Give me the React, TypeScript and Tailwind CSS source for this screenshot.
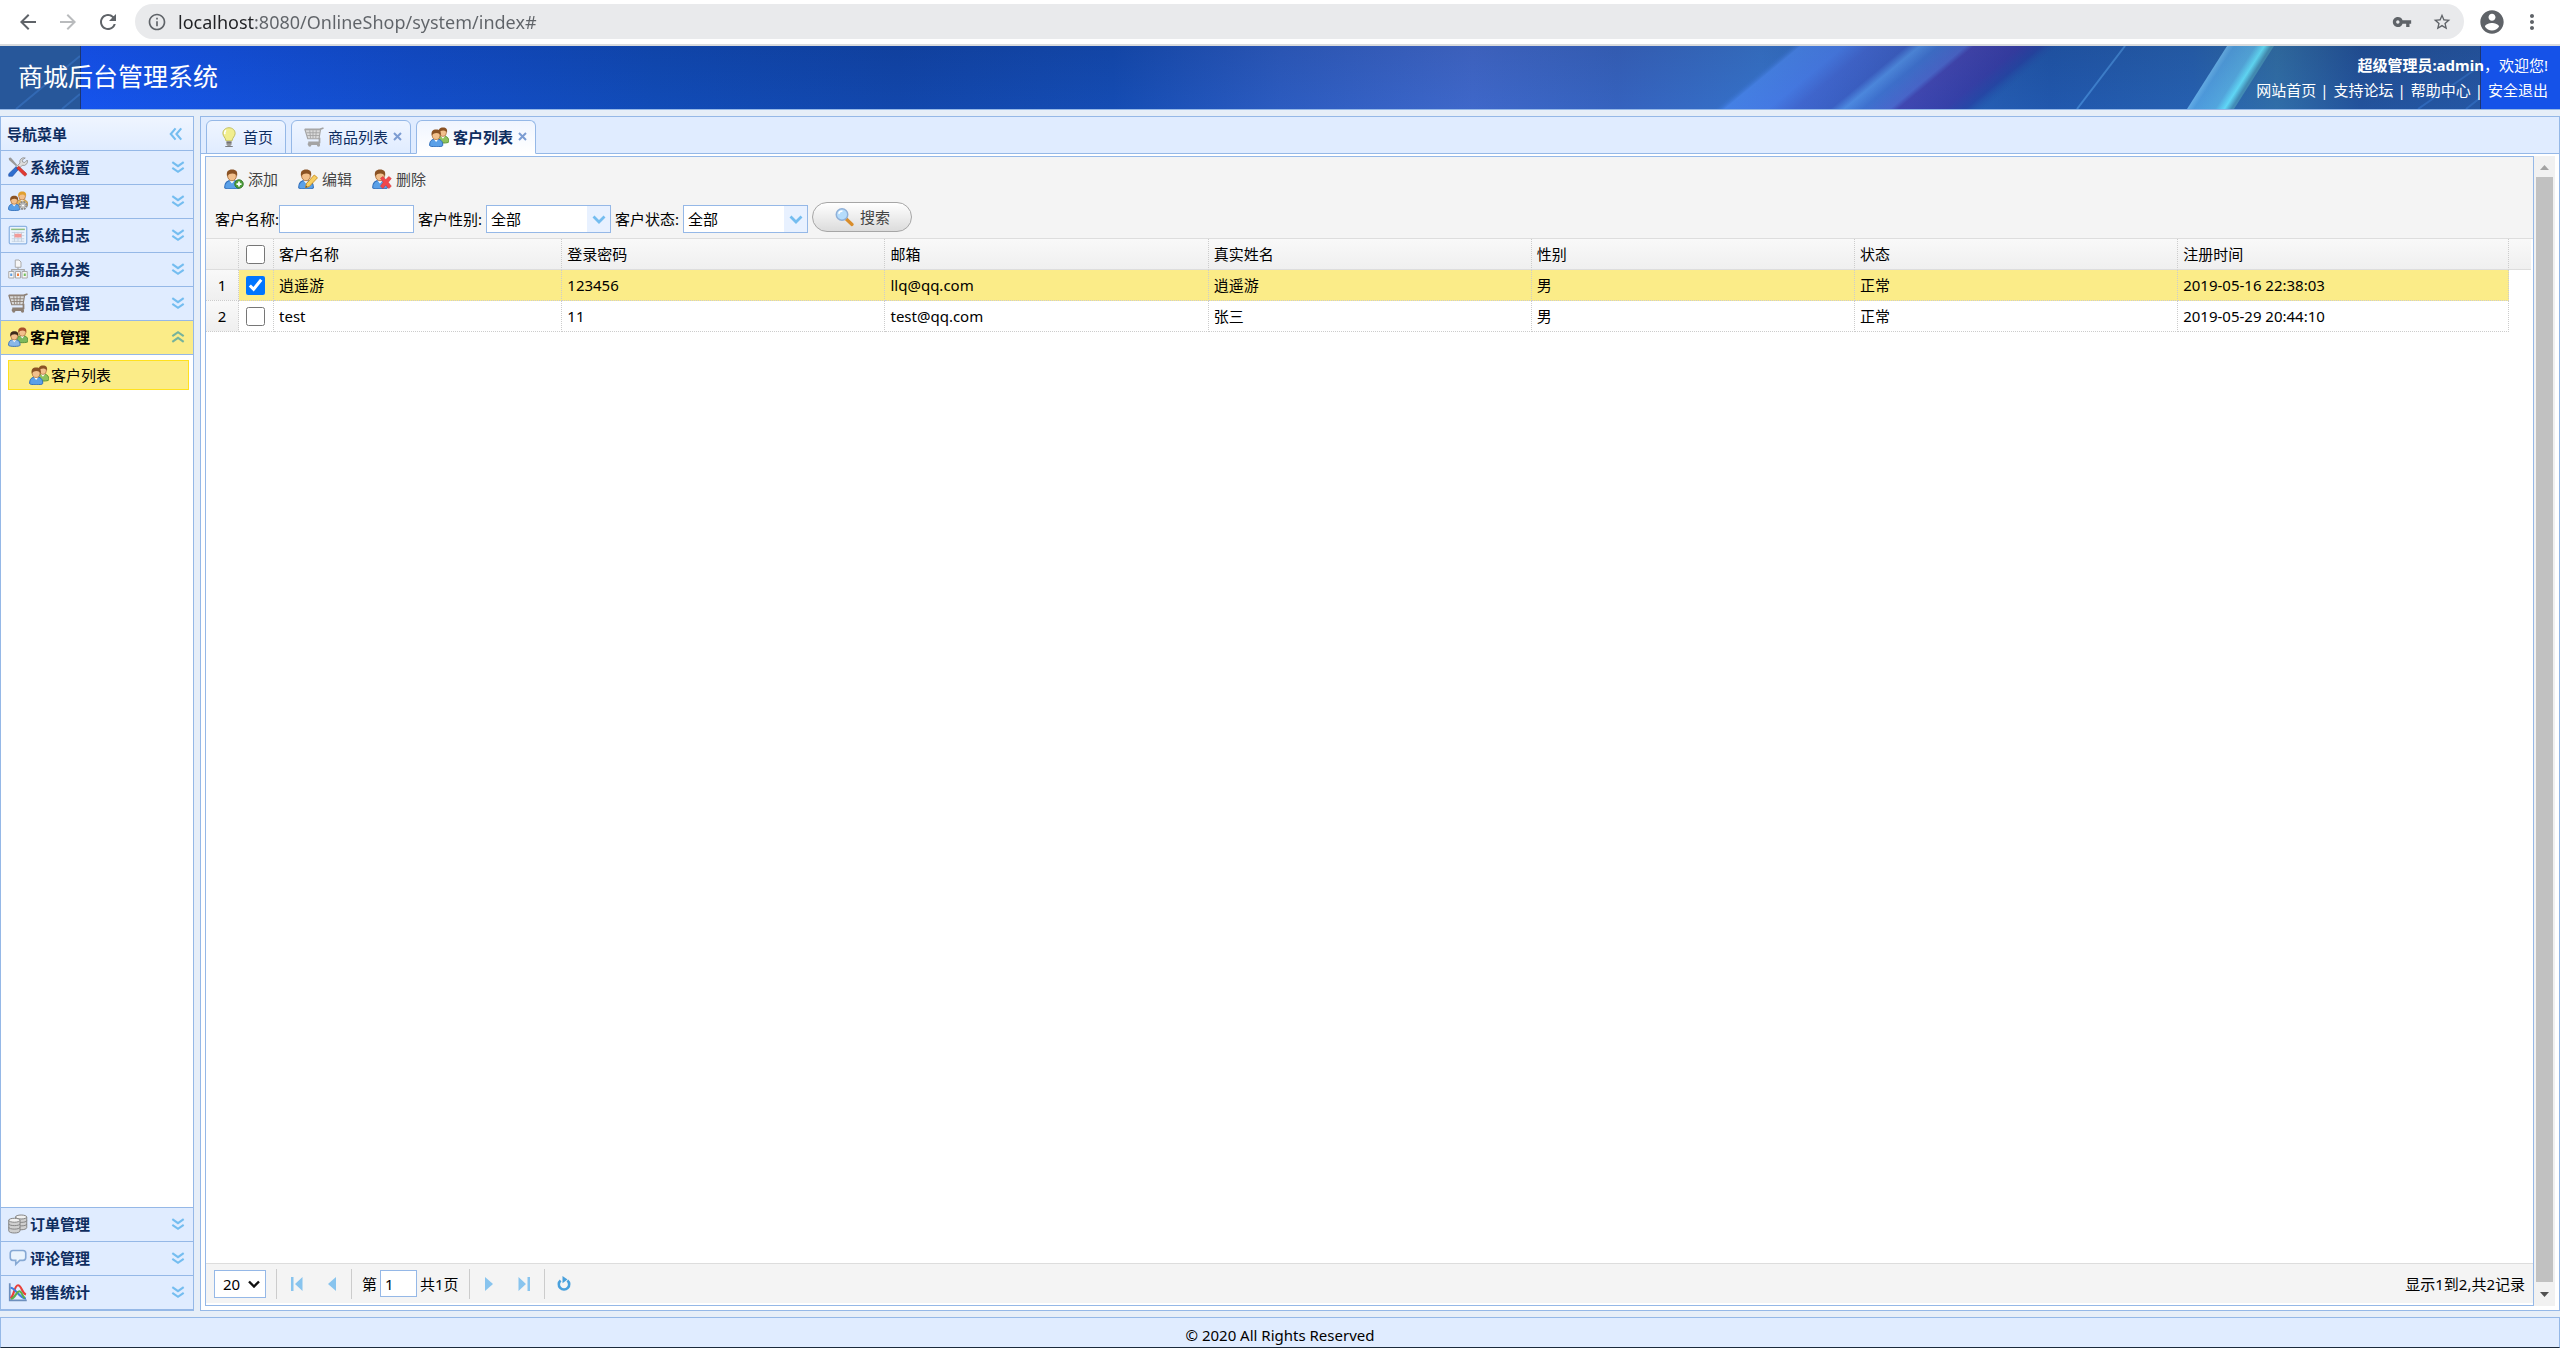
import { useState } from 'react';
import type { ReactNode } from 'react';
import {
  MdArrowBack,
  MdArrowForward,
  MdInfoOutline,
  MdMoreVert,
  MdRefresh,
  MdStarBorder,
  MdVpnKey,
} from 'react-icons/md';

/* ---------- small colour icons, 16x16 grid ---------- */

function Icon({ children }: { children: ReactNode }) {
  return (
    <svg viewBox="0 0 16 16" className="size-5 shrink-0" aria-hidden="true">
      {children}
    </svg>
  );
}

interface PersonProps {
  x: number;
  y: number;
  s?: number;
  hair?: string;
  shirt?: string;
  edge?: string;
}

function Person({ x, y, s = 1, hair = '#8a5224', shirt = '#5aa0e8', edge = '#2f6cb8' }: PersonProps) {
  return (
    <g transform={`translate(${x} ${y}) scale(${s})`}>
      <path d="M.5 13.2C.5 9.4 2.2 8 5.7 8s5.300 1.400 5.300 5.200c0 1.400-10.500 1.400-10.500 0z" fill={shirt} stroke={edge} strokeWidth="0.8" />
      <path d="M3.8 8l1.9 2.400L7.600 8z" fill="#fff" />
      <ellipse cx="5.7" cy="5" rx="3.1" ry="3.4" fill="#f2c08c" stroke="#a86a34" strokeWidth="0.6" />
      <path d="M2.2 5.400C1.500 1.800 3 .4 5.800.4s4.200 1.400 3.500 5C8.800 3.800 7.800 3.200 6 3.200s-3.200.6-3.800 2.200z" fill={hair} />
    </g>
  );
}

function ToolsIcon() {
  return (
    <Icon>
      <path d="M.6.800l1.600-.4L7.400 6.400l-1 1L.8 2.400z" fill="#999" />
      <path d="M13.800.800a3.200 3.200 0 0 0-4.200 4L6.600 8l1.700 1.700 3.100-3.100a3.200 3.200 0 0 0 4-4.200l-2 2-1.700-.4-.4-1.600z" fill="#ddd" stroke="#888" strokeWidth="0.6" />
      <path d="M6.400 7.800l2 2L3.600 15.400H.6v-2z" fill="#2f6fd0" stroke="#1d4c9e" strokeWidth="0.5" />
      <path d="M8.600 7.400l6 5.600c.9 1-.6 2.800-1.800 1.800L7 9z" fill="#e23a32" stroke="#b02020" strokeWidth="0.5" />
    </Icon>
  );
}

function UserGearIcon() {
  return (
    <Icon>
      <Person x={6.4} y={0} s={0.86} hair="#e0a030" shirt="#e8b860" edge="#b88430" />
      <Person x={0} y={3.4} s={0.86} />
      <circle cx="12" cy="11.6" r="2.8" fill="#ddd" stroke="#8a8a8a" strokeWidth="1.8" strokeDasharray="1.5 0.7" />
      <circle cx="12" cy="11.6" r="1.300" fill="#fff" stroke="#999" strokeWidth="0.6" />
    </Icon>
  );
}

function CalendarIcon() {
  return (
    <Icon>
      <rect x="1" y="1" width="14" height="14" rx="1" fill="#eaf3fd" stroke="#8db3e2" />
      <path d="M2.500 3.500h11" stroke="#8fbf80" strokeWidth="1.2" />
      <path d="M3 6h10M3 8.500h10M3 11h10M3 13h10M5.200 5.500v8M8 5.500v8M10.800 5.500v8" stroke="#c2cfde" strokeWidth="0.7" />
      <rect x="5.2" y="7" width="5.6" height="3" fill="#f29a96" />
    </Icon>
  );
}

function SitemapIcon() {
  return (
    <Icon>
      <path d="M8 6v3M3 10.500V8.500h10v2" stroke="#a9a9a9" fill="none" />
      <path d="M5.800.800h3l1.600 1.600v4.200H5.800zM.6 10h4.200v5.200H.6zM6 10h4v5.200H6zM11.200 10h4.200v5.200h-4.200z" fill="#f7f7f7" stroke="#a9a9a9" strokeWidth="0.8" />
      <path d="M1.800 11.600h1.600v2H1.800z" fill="#5f9ee0" />
      <path d="M7.200 11.600h1.600v2H7.200z" fill="#f08040" />
      <path d="M12.600 11.600h1.600v2h-1.600z" fill="#6fbf5a" />
    </Icon>
  );
}

function CartIcon({ tone = '#8c7f74' }: { tone?: string }) {
  return (
    <Icon>
      <path d="M.6 1.800h12L15.600.8" fill="none" stroke={tone} strokeWidth="1.4" />
      <path d="M.8 2.200h12.400L12 9.400H3z" fill="#dadada" stroke={tone} strokeWidth="0.9" />
      <path d="M2 4.600h10.600M2.600 6.800h9.600M4.600 2.600l.6 6.400M7.200 2.600v6.400M9.800 2.600l-.4 6.400" stroke={tone} strokeWidth="0.7" />
      <path d="M12.400 8.600v3.600H3.400M3 13.600h9.600" fill="none" stroke={tone} strokeWidth="1.4" />
      <circle cx="4.6" cy="14.4" r="1.300" fill={tone} />
      <circle cx="11.6" cy="14.4" r="1.300" fill={tone} />
    </Icon>
  );
}

function CustomersIcon() {
  return (
    <Icon>
      <Person x={6.4} y={0} s={0.88} hair="#a8502c" shirt="#7cb85c" edge="#4c8a34" />
      <Person x={0} y={3} s={0.88} hair="#3d2a1c" shirt="#8ab8e8" />
    </Icon>
  );
}

function GroupIcon() {
  return (
    <Icon>
      <Person x={6} y={0} s={0.9} shirt="#8fc25c" edge="#54902c" />
      <Person x={0} y={1.6} s={1} />
    </Icon>
  );
}

function DatabaseIcon() {
  return (
    <Icon>
      {[
        [6, 0.4],
        [0.6, 3],
      ].map(([x, y]) => (
        <g key={x} transform={`translate(${x} ${y})`} stroke="#858585" strokeWidth="0.8">
          <path d="M0 2v8.400c0 2.400 9 2.400 9 0V2z" fill="#cfcfcf" />
          <path d="M0 4.800c0 2 9 2 9 0M0 7.600c0 2 9 2 9 0" fill="none" />
          <ellipse cx="4.5" cy="2" rx="4.5" ry="1.6" fill="#f1f1f1" />
        </g>
      ))}
    </Icon>
  );
}

function CommentIcon() {
  return (
    <Icon>
      <path d="M4 2h8c1.400 0 2.200.9 2.200 2.200v3.400c0 1.400-.8 2.300-2.200 2.300H9.400L6.200 13V9.900H4c-1.400 0-2.200-.9-2.200-2.300V4.200C1.800 2.900 2.600 2 4 2z" fill="#eaf4fd" stroke="#86a9d4" strokeWidth="1.3" />
    </Icon>
  );
}

function ChartIcon() {
  return (
    <Icon>
      <path d="M1.400 1v13.600H15" fill="none" stroke="#6d8fbd" strokeWidth="1.4" />
      <path d="M2 13C5 11 5 2.600 8 2.600S11 9 14.400 10" fill="none" stroke="#e8403a" strokeWidth="1.7" />
      <path d="M2 4.600c4 0 7 8.600 12.400 8.600" fill="none" stroke="#3d7fe0" strokeWidth="1.7" />
      <path d="M2.400 13.400C6 13 6.600 7.400 9 7.400s2.400 4.600 4.600 5.400" fill="none" stroke="#5cae4a" strokeWidth="1.6" />
    </Icon>
  );
}

function BulbIcon() {
  return (
    <Icon>
      <path d="M8 .6c2.900 0 4.900 2 4.900 4.500 0 2.300-2.200 3.400-2.500 6H5.600c-.3-2.600-2.500-3.700-2.500-6C3.100 2.600 5.100.6 8 .6z" fill="#f1ee8e" stroke="#c2bf62" strokeWidth="0.8" />
      <path d="M5.600 2.600c-1 .8-1.200 2.200-.8 3.200" stroke="#fff" strokeWidth="1.2" fill="none" />
      <path d="M6 11.200h4v3l-1 1H7l-1-1z" fill="#9a9a9a" />
      <path d="M6 12.600h4M5 15.600h6" stroke="#555" strokeWidth="0.6" />
    </Icon>
  );
}

function UserAddIcon() {
  return (
    <Icon>
      <Person x={0} y={0} s={1.12} />
      <circle cx="12" cy="12" r="3.4" fill="#4f9e3c" stroke="#2f7424" strokeWidth="0.7" />
      <path d="M12 10v4M10 12h4" stroke="#fff" strokeWidth="1.4" />
    </Icon>
  );
}

function UserEditIcon() {
  return (
    <Icon>
      <Person x={0} y={0} s={1.12} />
      <path d="M6 15l.8-3.400L13 4.800l2.600 2.200-6.400 6.800z" fill="#f8cf62" stroke="#c98a1c" strokeWidth="0.7" />
      <path d="M6 15l.4-1.600 1.200 1z" fill="#444" />
    </Icon>
  );
}

function UserDeleteIcon() {
  return (
    <Icon>
      <Person x={0} y={0} s={1.12} />
      <path d="M6.800 7.400l2-1.400 2.200 2.600L13.400 6l2 1.600L13 10.600l2.400 3.200-2 1.800-2.400-2.800-2.200 2.800-2-1.800L9 10.600z" fill="#f0484c" stroke="#d8363c" strokeWidth="0.5" />
    </Icon>
  );
}

function SearchIcon() {
  return (
    <Icon>
      <path d="M9.600 9.400l4.800 4.600" stroke="#d98d2b" strokeWidth="2.6" strokeLinecap="round" />
      <circle cx="6.4" cy="6" r="4.6" fill="#b5dcfb" stroke="#8fb0d8" strokeWidth="1.2" />
      <path d="M3.800 5.400c.4-1.600 1.600-2.200 3-2.200" stroke="#fff" strokeWidth="1.2" fill="none" />
    </Icon>
  );
}

/* ---------- arrows ---------- */

type Direction = 'left' | 'down' | 'up';

const chevronPaths: Record<Direction, string> = {
  left: 'M7.500 1.500L2 8l5.500 6.500M14 1.500L8.500 8l5.500 6.500',
  down: 'M1.500 2.500L8 7l6.500-4.500M1.500 9L8 13.500 14.500 9',
  up: 'M1.500 7L8 2.500 14.500 7M1.500 13.500L8 9l6.500 4.500',
};

function DoubleChevron({ dir }: { dir: Direction }) {
  return (
    <svg viewBox="0 0 16 16" className="size-3.5 shrink-0" aria-hidden="true">
      <path d={chevronPaths[dir]} fill="none" stroke={dir === 'up' ? '#76b39c' : '#74bdf0'} strokeWidth="2.4" />
    </svg>
  );
}

/* ---------- banner ---------- */

function BannerArt() {
  return (
    <svg
      viewBox="0 0 2560 63"
      preserveAspectRatio="xMidYMid slice"
      className="absolute inset-0 size-full"
      aria-hidden="true"
    >
      <defs>
        <linearGradient id="base" gradientUnits="userSpaceOnUse" x1="81" y1="0" x2="2481" y2="0">
          <stop offset="0" stopColor="#1552f0" />
          <stop offset="0.06" stopColor="#1450dc" />
          <stop offset="0.14" stopColor="#124bc6" />
          <stop offset="0.24" stopColor="#1048b0" />
          <stop offset="0.34" stopColor="#1143a3" />
          <stop offset="0.43" stopColor="#1449ac" />
          <stop offset="0.5" stopColor="#2f5bbb" />
          <stop offset="0.58" stopColor="#4569c6" />
          <stop offset="0.64" stopColor="#3a63b9" />
          <stop offset="0.7" stopColor="#3a74c4" />
          <stop offset="0.82" stopColor="#2256a4" />
          <stop offset="0.88" stopColor="#2860a8" />
          <stop offset="0.915" stopColor="#34709f" />
          <stop offset="0.95" stopColor="#245090" />
          <stop offset="1" stopColor="#27559a" />
        </linearGradient>
        <linearGradient id="shade" x1="0" y1="0" x2="0" y2="1">
          <stop offset="0" stopColor="#0c2f80" stopOpacity="0.15" />
          <stop offset="1" stopColor="#1a60e0" stopOpacity="0.15" />
        </linearGradient>
        <linearGradient id="rays" gradientUnits="userSpaceOnUse" x1="1790" y1="0" x2="1900" y2="133">
          <stop offset="0" stopColor="#3a72c8" stopOpacity="0" />
          <stop offset="0.04" stopColor="#4c86e6" />
          <stop offset="0.2" stopColor="#4c7ee4" />
          <stop offset="0.3" stopColor="#4668cc" />
          <stop offset="0.43" stopColor="#4060c0" />
          <stop offset="0.48" stopColor="#5590e0" />
          <stop offset="0.55" stopColor="#4474cc" />
          <stop offset="0.65" stopColor="#5068c8" />
          <stop offset="0.68" stopColor="#4644aa" />
          <stop offset="0.85" stopColor="#3a3ca0" />
          <stop offset="0.93" stopColor="#28449e" />
          <stop offset="1" stopColor="#2256a4" stopOpacity="0" />
        </linearGradient>
        <linearGradient id="cyan" gradientUnits="userSpaceOnUse" x1="2225" y1="0" x2="2258" y2="21">
          <stop offset="0" stopColor="#78c0ec" />
          <stop offset="0.2" stopColor="#56a4dc" />
          <stop offset="0.65" stopColor="#5cb2de" />
          <stop offset="0.85" stopColor="#6cecfc" />
          <stop offset="1" stopColor="#4a94b0" />
        </linearGradient>
      </defs>
      <rect width="2560" height="63" fill="url(#base)" />
      <path d="M1788 0h272l-76 63h-272z" fill="url(#rays)" />
      <path d="M2125 0l-48 63" stroke="#4486cc" strokeWidth="2" />
      <path d="M2227 0h47l-40 63h-47z" fill="url(#cyan)" />
      <path d="M2480 20l-62 43M2480 52l-14 11" stroke="#3269b4" strokeWidth="2" />
      <rect width="2560" height="63" fill="url(#shade)" />
      {/* the picture tiles, so its ends show at both sides */}
      <path d="M0 0h81v63H0z" fill="#27579a" />
      <path d="M80 10L16 63M80 48L62 63" stroke="#3269b4" strokeWidth="2" />
      <path d="M2481 0h79v63h-79z" fill="#1552e8" />
      <path d="M80.500 0v63M2480.500 0v63" stroke="#1c3672" />
    </svg>
  );
}

/* ---------- data ---------- */

interface MenuItem {
  label: string;
  icon: ReactNode;
}

const topMenu: MenuItem[] = [
  { label: '系统设置', icon: <ToolsIcon /> },
  { label: '用户管理', icon: <UserGearIcon /> },
  { label: '系统日志', icon: <CalendarIcon /> },
  { label: '商品分类', icon: <SitemapIcon /> },
  { label: '商品管理', icon: <CartIcon /> },
];

const bottomMenu: MenuItem[] = [
  { label: '订单管理', icon: <DatabaseIcon /> },
  { label: '评论管理', icon: <CommentIcon /> },
  { label: '销售统计', icon: <ChartIcon /> },
];

const columns = ['客户名称', '登录密码', '邮箱', '真实姓名', '性别', '状态', '注册时间'];

const customers = [
  ['逍遥游', '123456', 'llq@qq.com', '逍遥游', '男', '正常', '2019-05-16 22:38:03'],
  ['test', '11', 'test@qq.com', '张三', '男', '正常', '2019-05-29 20:44:10'],
];

/* ---------- parts ---------- */

function BrowserBar() {
  return (
    <div className="flex h-[46px] shrink-0 items-center border-b-2 border-[#d9dbdd] bg-white pb-px text-[#5f6368]">
      <div className="flex w-[135px] shrink-0 items-center gap-4 pl-4">
        <button type="button" aria-label="后退"><MdArrowBack className="size-6" /></button>
        <button type="button" aria-label="前进"><MdArrowForward className="size-6 text-[#b9bbbd]" /></button>
        <button type="button" aria-label="刷新"><MdRefresh className="size-6" /></button>
      </div>
      <div className="flex h-[35px] flex-1 items-center rounded-full bg-[#e9eaec] pr-3 pl-3">
        <MdInfoOutline className="size-5" />
        {/* host part is darker than the path */}
        <input
          type="text"
          aria-label="地址"
          className="ml-[11px] min-w-0 flex-1 bg-[linear-gradient(90deg,#202124_77px,#5f6368_77px)] bg-clip-text text-lg leading-6 text-transparent"
          defaultValue="localhost:8080/OnlineShop/system/index#"
        />
        <MdVpnKey className="mr-5 size-5" />
        <MdStarBorder className="size-5" />
      </div>
      <button type="button" aria-label="账号" className="ml-3.5">
        <svg viewBox="0 0 24 24" className="size-7" fill="currentColor">
          <path d="M12 2C6.480 2 2 6.480 2 12s4.480 10 10 10 10-4.480 10-10S17.520 2 12 2zm0 3c1.660 0 3 1.340 3 3s-1.340 3-3 3-3-1.340-3-3 1.340-3 3-3zm0 14.200c-2.500 0-4.710-1.280-6-3.220.03-1.990 4-3.080 6-3.080 1.990 0 5.970 1.090 6 3.080-1.290 1.940-3.500 3.220-6 3.220z" />
        </svg>
      </button>
      <button type="button" aria-label="更多" className="mr-4 ml-3.5"><MdMoreVert className="size-6" /></button>
    </div>
  );
}

function Banner() {
  const links = ['网站首页', '支持论坛', '帮助中心', '安全退出'];
  return (
    <header className="relative h-16 shrink-0 overflow-hidden border-b border-[#95b8e7]">
      <BannerArt />
      <div className="relative flex h-full items-center justify-between pr-3 pl-[18px] text-white">
        <h1 className="pb-[3px] text-[25px] leading-8">商城后台管理系统</h1>
        <div className="text-right leading-[25px]">
          <p><strong>超级管理员:admin</strong>，欢迎您!</p>
          <nav className="flex justify-end gap-1">
            {links.map((link, i) => (
              <span key={link} className="flex gap-[5px]">
                {i > 0 && <span>|</span>}
                <a href="#">{link}</a>
              </span>
            ))}
          </nav>
        </div>
      </div>
    </header>
  );
}

function MenuHeader({ item, active = false }: { item: MenuItem; active?: boolean }) {
  return (
    <button
      type="button"
      className={`flex h-[34px] w-full shrink-0 items-center border-b border-[#95b8e7] pr-2 pb-0.5 pl-[7px] font-bold ${
        active ? 'bg-[#fbec88] text-black' : 'bg-[#e0ecff] text-[#0e2d5f]'
      }`}
    >
      {item.icon}
      <span className="ml-0.5 flex-1 text-left">{item.label}</span>
      <DoubleChevron dir={active ? 'up' : 'down'} />
    </button>
  );
}

function Sidebar() {
  return (
    <aside className="flex w-[194px] shrink-0 flex-col border border-[#95b8e7] bg-white">
      <div className="flex h-[34px] shrink-0 items-center justify-between border-b border-[#95b8e7] bg-gradient-to-b from-[#eff5ff] to-[#e0ecff] pr-2.5 pl-1.5 font-bold text-[#0e2d5f]">
        导航菜单
        <button type="button" aria-label="收起菜单"><DoubleChevron dir="left" /></button>
      </div>
      {topMenu.map((item) => (
        <MenuHeader key={item.label} item={item} />
      ))}
      <MenuHeader item={{ label: '客户管理', icon: <CustomersIcon /> }} active />
      <div className="flex-1 pt-[5px] pr-1 pl-[7px]">
        <a
          href="#"
          className="flex h-[30px] items-center gap-0.5 border border-[#ffe11e] bg-[#fbec88] pl-5 text-black"
        >
          <GroupIcon />
          客户列表
        </a>
      </div>
      <div className="border-t border-[#95b8e7]">
        {bottomMenu.map((item) => (
          <MenuHeader key={item.label} item={item} />
        ))}
      </div>
    </aside>
  );
}

interface TabProps {
  label: string;
  icon: ReactNode;
  active?: boolean;
  closable?: boolean;
}

function Tab({ label, icon, active = false, closable = false }: TabProps) {
  return (
    <div
      className={`-mb-px flex h-[34px] items-center rounded-t-md border border-[#95b8e7] bg-gradient-to-b from-[#eff5ff] pb-px pl-3 text-[#0e2d5f] ${
        active ? 'border-b-white to-white font-bold' : 'to-[#e0ecff]'
      } ${closable ? 'pr-2' : 'pr-3'}`}
    >
      {icon}
      <a href="#" className="ml-1">{label}</a>
      {closable && (
        <button type="button" aria-label={`关闭${label}`} className="ml-[5px]">
          <svg viewBox="0 0 9 9" className="size-[9px]">
            <path d="M1 1l7 7M8 1L1 8" stroke="#7c9cd2" strokeWidth="2" />
          </svg>
        </button>
      )}
    </div>
  );
}

function ComboBox({ id, label }: { id: string; label: string }) {
  return (
    <div className="flex items-center gap-1">
      <label htmlFor={id}>{label}</label>
      <div className="relative">
        <select id={id} className="block h-7 w-[125px] appearance-none border border-[#95b8e7] bg-white pl-1">
          <option>全部</option>
        </select>
        <span className="pointer-events-none absolute inset-y-px right-px flex w-[23px] items-center justify-center bg-[#e8f1ff]">
          <svg viewBox="0 0 14 9" className="h-[9px] w-3.5">
            <path d="M1.500 1.500L7 7l5.500-5.500" fill="none" stroke="#74bdf0" strokeWidth="2.8" />
          </svg>
        </span>
      </div>
    </div>
  );
}

function Toolbar() {
  const actions: MenuItem[] = [
    { label: '添加', icon: <UserAddIcon /> },
    { label: '编辑', icon: <UserEditIcon /> },
    { label: '删除', icon: <UserDeleteIcon /> },
  ];
  return (
    <div className="flex h-[82px] shrink-0 flex-col border-b border-[#ddd] bg-[#f4f4f4]">
      <div className="flex h-[46px] items-center pb-0.5 pl-2">
        {actions.map((a) => (
          <button key={a.label} type="button" className="flex items-center gap-1 px-2.5 text-[#444]">
            {a.icon}
            {a.label}
          </button>
        ))}
      </div>
      <form className="flex h-8 items-center gap-1 pl-[9px]" onSubmit={(e) => e.preventDefault()}>
        <div className="flex items-center">
          <label htmlFor="name">客户名称:</label>
          <input id="name" type="text" className="h-7 w-[135px] border border-[#95b8e7] bg-white px-1" />
        </div>
        <ComboBox id="sex" label="客户性别:" />
        <ComboBox id="status" label="客户状态:" />
        <button
          type="submit"
          className="mb-1 flex h-[30px] w-[100px] items-center justify-center gap-1.5 rounded-full border border-[#a6a6a6] bg-gradient-to-b from-white to-[#dcdcdc] text-[#444]"
        >
          <SearchIcon />
          搜索
        </button>
      </form>
    </div>
  );
}

function CustomerGrid() {
  const [checked, setChecked] = useState([true, false]);
  return (
    <div className="flex-1 pr-0.5">
      <table className="w-full table-fixed border-separate border-spacing-0 text-left">
        <colgroup>
          <col className="w-[33px]" />
          <col className="w-[35px]" />
          <col className="w-[12.4%]" />
          <col className="w-[13.9%]" />
          <col className="w-[13.9%]" />
          <col className="w-[13.9%]" />
          <col className="w-[13.9%]" />
          <col className="w-[13.9%]" />
          <col />
          <col className="w-[22px]" />
        </colgroup>
        <thead>
          <tr className="h-[31px] bg-gradient-to-b from-[#f9f9f9] to-[#efefef] *:border-b *:border-b-[#ddd] *:p-0 *:font-normal">
            <th className="border-r border-r-[#ccc] [border-right-style:dotted]" />
            <th className="border-r border-r-[#ccc] [border-right-style:dotted]">
              <input
                type="checkbox"
                aria-label="全选"
                className="ml-[7px] block size-[19px]"
                checked={checked.every(Boolean)}
                onChange={(e) => setChecked(checked.map(() => e.target.checked))}
              />
            </th>
            {columns.map((c) => (
              <th key={c} className="border-r border-r-[#ccc] [border-right-style:dotted]">
                <span className="pl-[5px]">{c}</span>
              </th>
            ))}
            <th />
          </tr>
        </thead>
        <tbody>
          {customers.map((row, i) => (
            <tr key={row[2]} className="h-[31px] *:p-0">
              <td className="border-r border-b border-dotted border-[#ccc] bg-gradient-to-b from-[#f9f9f9] to-[#efefef] text-center">
                {i + 1}
              </td>
              <td className={`border-r border-b border-dotted border-[#ccc] ${checked[i] ? 'bg-[#fbec88]' : ''}`}>
                <input
                  type="checkbox"
                  aria-label={row[0]}
                  className="ml-[7px] block size-[19px]"
                  checked={checked[i]}
                  onChange={(e) => setChecked(checked.map((v, n) => (n === i ? e.target.checked : v)))}
                />
              </td>
              {row.map((cell, n) => (
                <td
                  key={columns[n]}
                  className={`border-r border-b border-dotted border-[#ccc] ${checked[i] ? 'bg-[#fbec88]' : ''}`}
                >
                  <span className="pl-[5px]">{cell}</span>
                </td>
              ))}
              <td />
            </tr>
          ))}
        </tbody>
      </table>
    </div>
  );
}

function PageButton({ label, d }: { label: string; d: string }) {
  return (
    <button type="button" aria-label={label} className="flex w-[35px] justify-center">
      <svg viewBox="0 0 16 16" className="size-4">
        <path d={d} fill="#88c4ee" />
      </svg>
    </button>
  );
}

function Pager() {
  return (
    <div className="mb-0.5 flex h-10 shrink-0 items-center border-t border-[#ddd] bg-[#f4f4f4] px-2">
      <div className="relative">
        <select aria-label="每页条数" className="block h-7 w-[52px] appearance-none border border-[#95b8e7] bg-white pl-2">
          <option>20</option>
        </select>
        <svg viewBox="0 0 12 8" className="pointer-events-none absolute top-2.5 right-1.5 h-2 w-3">
          <path d="M1 1.500l5 5 5-5" fill="none" stroke="#111" strokeWidth="2.400" />
        </svg>
      </div>
      <div className="ml-2.5 flex h-[30px] items-center border-x border-[#ccc] px-0.5">
        <PageButton label="首页" d="M2 1h2.500v14H2zM13.500 1v14L6 8z" />
        <PageButton label="上一页" d="M12 1v14L4 8z" />
      </div>
      <label htmlFor="page" className="ml-2.5">第</label>
      <input id="page" type="text" defaultValue="1" className="mx-[3px] h-[27px] w-[37px] border border-[#95b8e7] bg-white pl-1" />
      <span>共1页</span>
      <div className="ml-2.5 flex h-[30px] items-center border-x border-[#ccc] px-0.5">
        <PageButton label="下一页" d="M4 1v14l8-7z" />
        <PageButton label="末页" d="M2.500 1v14L10 8zM11.500 1H14v14h-2.500z" />
      </div>
      <button type="button" aria-label="刷新" className="ml-0.5 flex w-[35px] justify-center">
        <svg viewBox="0 0 16 16" className="size-4">
          <path d="M4.600 4.400a5.200 5.200 0 1 0 6.800 0" fill="none" stroke="#49a0dc" strokeWidth="2.600" />
          <path d="M6.500 0l5 3.400-5 3.800z" fill="#49a0dc" />
        </svg>
      </button>
      <span className="ml-auto">显示1到2,共2记录</span>
    </div>
  );
}

function ScrollBar() {
  return (
    <div className="flex w-[21px] shrink-0 flex-col items-center bg-[#f1f1f1]" aria-hidden="true">
      <svg viewBox="0 0 21 21" className="size-[21px] shrink-0">
        <path d="M6 14h9l-4.500-5z" fill="#a3a3a3" />
      </svg>
      <div className="w-[17px] flex-1 bg-[#c1c1c1]" />
      <svg viewBox="0 0 21 24" className="h-6 w-[21px] shrink-0">
        <path d="M6 10h9l-4.500 5z" fill="#505050" />
      </svg>
    </div>
  );
}

export default function App() {
  return (
    <div className="flex h-screen flex-col overflow-hidden bg-[#e6eef8] font-['Noto_Sans','Noto_Sans_CJK_SC',sans-serif] text-[15px] leading-5 text-black">
      <BrowserBar />
      <Banner />
      <div className="flex min-h-0 flex-1 gap-1.5 py-1.5">
        <Sidebar />
        <main className="flex min-w-0 flex-1 flex-col border border-[#95b8e7] bg-white">
          <div className="flex h-[37px] shrink-0 items-end gap-[5px] border-b border-[#95b8e7] bg-[#e0ecff] pl-[5px]">
            <Tab label="首页" icon={<BulbIcon />} />
            <Tab label="商品列表" icon={<CartIcon tone="#a4a4a4" />} closable />
            <Tab label="客户列表" icon={<GroupIcon />} active closable />
          </div>
          <div className="flex min-h-0 flex-1 pt-0.5 pr-1 pb-1 pl-1">
            <section className="flex min-w-0 flex-1 flex-col border border-[#95b8e7]">
              <Toolbar />
              <CustomerGrid />
              <Pager />
            </section>
            <ScrollBar />
          </div>
        </main>
      </div>
      <footer className="flex h-[31px] shrink-0 items-center justify-center border border-[#95b8e7] border-b-[#1b2a3b] bg-[#e0ecff] pt-1">
        © 2020 All Rights Reserved
      </footer>
    </div>
  );
}
